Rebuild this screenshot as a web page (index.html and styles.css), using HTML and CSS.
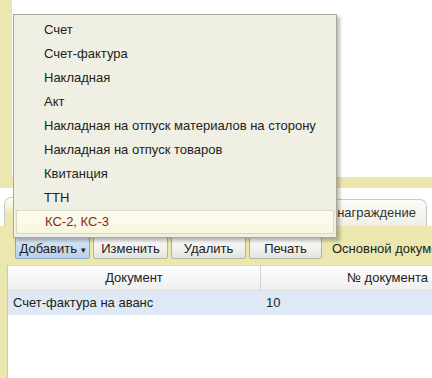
FILE: index.html
```html
<!DOCTYPE html>
<html lang="ru">
<head>
  <meta charset="UTF-8" />
  <title>Документы</title>
  <link rel="stylesheet" href="styles.css">
</head>
<body>
  <div class="form">
    <div class="top-area"></div>
    <div class="band"></div>

    <!-- tabs -->
    <div class="tabbar">
      <div class="tab tab-active"></div>
      <div class="tab tab-other">Агентское вознаграждение</div>
    </div>

    <div class="panel">
      <div class="toolbar">
        <button class="btn btn-add">Добавить <span class="caret">▾</span></button>
        <button class="btn">Изменить</button>
        <button class="btn">Удалить</button>
        <button class="btn btn-print">Печать</button>
        <span class="label">Основной документ</span>
      </div>

      <div class="grid">
        <div class="grid-head">
          <div class="col col-doc">Документ</div>
          <div class="col col-num">№ документа</div>
        </div>
        <div class="grid-row">
          <div class="col col-doc">Счет-фактура на аванс</div>
          <div class="col col-num">10</div>
        </div>
      </div>
    </div>
  </div>

  <!-- popup of the "Добавить" button -->
  <ul class="menu">
    <li>Счет</li>
    <li>Счет-фактура</li>
    <li>Накладная</li>
    <li>Акт</li>
    <li>Накладная на отпуск материалов на сторону</li>
    <li>Накладная на отпуск товаров</li>
    <li>Квитанция</li>
    <li>ТТН</li>
    <li class="active">КС-2, КС-3</li>
  </ul>
</body>
</html>
```

FILE: styles.css
```css
body {
  margin: 0;
  width: 432px;
  height: 378px;
  overflow: hidden;
  background: #ebe7ae;
  font-family: "Liberation Sans", Arial, sans-serif;
  font-size: 13px;
  color: #222;
  position: relative;
}

.form {
  display: flex;
  flex-direction: column;
  height: 378px;
}

.top-area {
  height: 177px;
  margin-left: 12px;
  background: #fff;
}

.band {
  height: 11px;
}

.tabbar {
  height: 38px;
  background: #fff;
  display: flex;
  align-items: flex-end;
  padding-left: 4px;
  gap: 2px;
}

.tab {
  height: 27px;
  line-height: 26px;
  border: 1px solid #c9c9bc;
  border-bottom: none;
  border-radius: 7px 7px 0 0;
  box-sizing: border-box;
  padding: 0 10px;
  white-space: nowrap;
}

.tab-active {
  height: 29px;
  width: 150px;
  background: linear-gradient(#fff, #ebe7ae 60%);
}

.tab-other {
  flex: 1;
  margin-right: 5px;
  text-align: right;
  background: linear-gradient(#fdfdf8, #efefe6);
  color: #333;
}

.panel {
  flex: 1;
  display: flex;
  flex-direction: column;
}

.toolbar {
  display: flex;
  align-items: center;
  gap: 3px;
  padding: 11px 0 0 15px;
  height: 22px;
  white-space: nowrap;
}

.btn {
  flex: none;
  box-sizing: border-box;
  height: 22px;
  width: 75px;
  font: inherit;
  color: #222;
  padding: 0;
  border: 1px solid #b3b3a8;
  border-radius: 2px;
  background: linear-gradient(#fdfdfd, #e4e4de);
}

.btn-print {
  width: 73px;
}

.btn-add {
  background: linear-gradient(#dbe8f7, #b9cfea);
  border-color: #8ea9c9;
}

.caret {
  font-size: 9px;
}

.label {
  flex: none;
  margin-left: 7px;
}

.grid {
  flex: 1;
  margin: 6px 0 0 7px;
  background: #fff;
  border-left: 1px solid #c8c8bc;
  border-top: 1px solid #d8d8d0;
}

.grid-head,
.grid-row {
  display: flex;
  height: 24px;
  line-height: 24px;
}

.grid-head {
  background: linear-gradient(#fff, #eeeeee);
  border-bottom: 1px solid #dcdcdc;
}

.grid-head .col {
  text-align: center;
}

.grid-head .col-doc {
  border-right: 1px solid #d4d4d4;
}

.grid-row {
  background: #dfe8f5;
}

.col {
  flex: none;
  width: 253px;
  white-space: nowrap;
  box-sizing: border-box;
}

.grid-row .col-doc {
  padding-left: 5px;
}

.grid-row .col-num {
  padding-left: 5px;
}

.menu {
  position: absolute;
  left: 13px;
  top: 14px;
  width: 324px;
  height: 224px;
  box-sizing: border-box;
  margin: 0;
  padding: 3px 2px;
  list-style: none;
  background: #efefe3;
  border: 1px solid #a7a795;
  box-shadow: 3px 3px 3px rgba(0, 0, 0, 0.25);
}

.menu li {
  height: 24px;
  line-height: 24px;
  padding-left: 28px;
  box-sizing: border-box;
  white-space: nowrap;
}

.menu li.active {
  color: #8e1f1f;
  border: 1px solid #dadac4;
  line-height: 22px;
  background: linear-gradient(#fdfdf1, #f7f6de);
}
```
